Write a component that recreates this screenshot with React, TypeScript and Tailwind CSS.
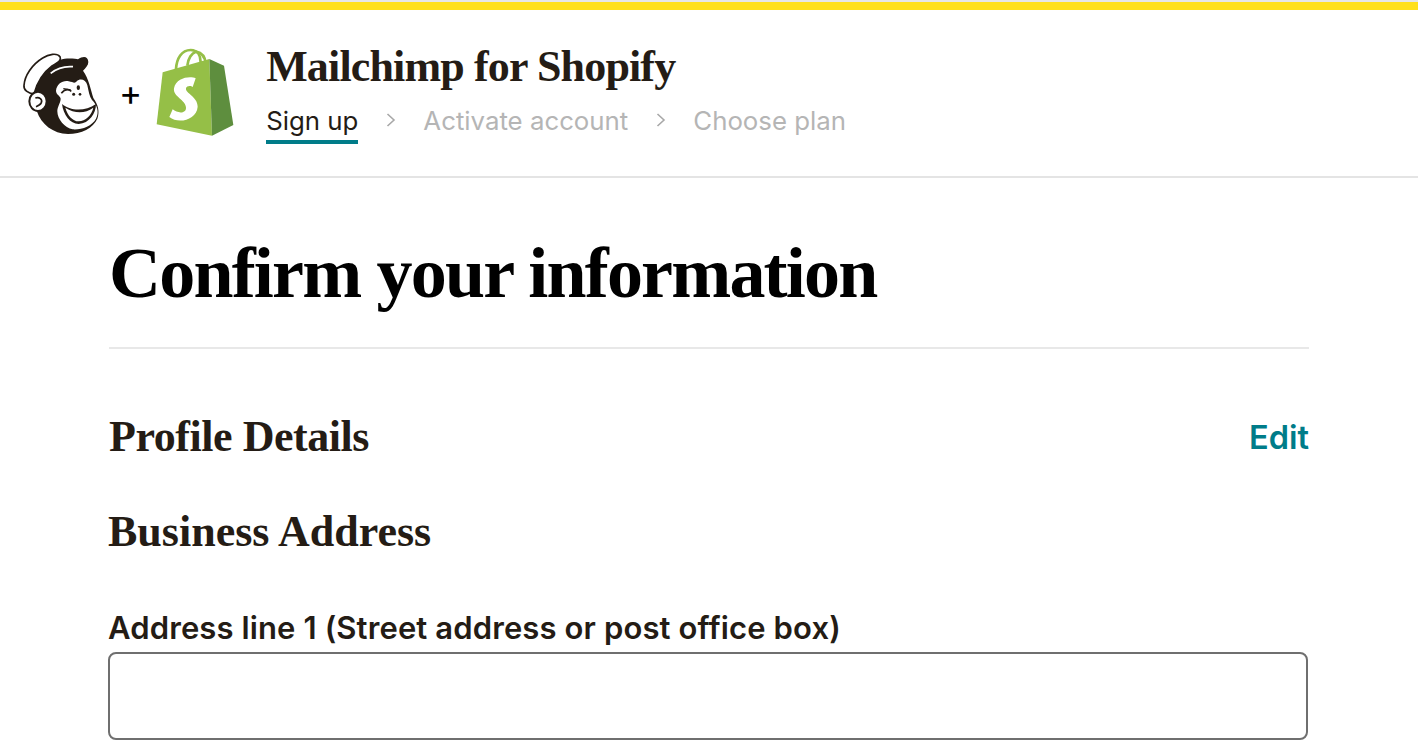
import React from "react";

const serif = "font-['Liberation_Serif',serif]";

const MonkeyLogo: React.FC = () => (
   <svg width="85" height="88" viewBox="0 0 255 264" className="shrink-0">
      {/* head */}
      <path d="M125 36 C150 28 175 34 180 34 C195 24 210 24 211 42 C211 52 203 60 195 68 C212 90 218 125 226 150 C240 170 246 190 238 212 C226 240 190 258 150 258 C105 256 70 230 56 188 C46 150 46 105 80 70 C92 56 108 44 125 36 Z" fill="#241C15" />
      {/* cap peak */}
      <path d="M18 112 C20 82 42 50 74 30 C92 18 117 14 126 26 C132 40 116 44 102 54 C78 72 58 100 48 138 C30 136 16 126 18 112 Z" fill="#fff" stroke="#241C15" strokeWidth="5" />
      <path d="M98 76 C115 62 140 54 165 56" fill="none" stroke="#fff" strokeWidth="5" />
      {/* ear */}
      <ellipse cx="60" cy="160" rx="26" ry="29" fill="#fff" stroke="#241C15" strokeWidth="6" />
      <path d="M52 150 C64 146 74 154 70 164 C67 171 60 174 54 176" fill="none" stroke="#241C15" strokeWidth="5" />
      {/* face */}
      <path d="M114 128 C116 108 135 96 152 100 C165 102 170 108 176 100 C186 90 204 94 208 112 C212 130 214 146 222 156 C238 172 244 192 234 212 C222 234 190 246 164 244 C140 240 118 214 118 190 C118 176 128 164 128 152 C126 142 114 140 114 128 Z" fill="#fff" />
      {/* wink */}
      <path d="M130 136 C140 124 150 122 160 130" fill="none" stroke="#241C15" strokeWidth="5" />
      <path d="M136 122 L158 126" fill="none" stroke="#241C15" strokeWidth="4" />
      <ellipse cx="181" cy="119" rx="5" ry="7" fill="#241C15" />
      <circle cx="167" cy="139" r="4.500" fill="#241C15" />
      <circle cx="186" cy="139" r="4" fill="#241C15" />
      {/* smile */}
      <path d="M132 168 C155 188 200 192 234 168 C234 196 214 226 182 228 C156 228 136 200 132 168 Z" fill="#241C15" />
      <path d="M142 179 C170 197 200 198 226 179 C222 200 202 220 182 220 C164 220 148 202 142 179 Z" fill="#fff" />
   </svg>
);

const ShopifyLogo: React.FC = () => (
   <svg width="90" height="95" viewBox="0 0 270 285" className="shrink-0">
      <path d="M78 72 C80 40 95 15 122 15 C145 15 152 35 152 52" fill="none" stroke="#95BF47" strokeWidth="8" />
      <path d="M112 62 C114 40 125 24 138 20 C158 24 166 40 167 56" fill="none" stroke="#95BF47" strokeWidth="8" />
      <path d="M38 82 L178 42 L186 272 L20 238 Z" fill="#95BF47" />
      <path d="M178 42 L222 62 L250 240 L186 272 Z" fill="#5E8E3E" />
      <path d="M137 100 C120 92 78 98 72 130 C68 155 108 165 108 188 C108 207 82 205 68 193 L58 216 C85 238 140 225 143 185 C143 155 105 145 108 130 C110 120 125 122 128 126 Z" fill="#fff" />
   </svg>
);

const Chevron: React.FC = () => (
   <svg width="10" height="16" viewBox="0 0 10 16" className="mx-[27.500px] mb-[6px] shrink-0">
      <path d="M1.500 2 L8 8 L1.500 14" fill="none" stroke="#a8a8a8" strokeWidth="1.600" />
   </svg>
);

const App: React.FC = () => {
   return (
      <div className="h-[751px] overflow-hidden bg-white font-['Inter',sans-serif] text-[#241c15]">
         <div className="h-[10px] border-t-2 border-[#e6e6e6] bg-[#ffe01b]" />

         <header className="flex h-[168px] items-center border-b-2 border-[#e4e4e4] pl-[18px] pb-[2px]">
            <MonkeyLogo />
            <span className="ml-[16px] mr-[8px] text-[35px] leading-none font-normal text-black">+</span>
            <ShopifyLogo />
            <div className="ml-[26px] mb-[2px]">
               <h1 className={`${serif} text-[44px] leading-[56px] font-bold tracking-[-0.85px]`}>Mailchimp for Shopify</h1>
               <nav className="mt-[8px] flex items-center text-[25.800px] leading-[36px] text-[#b5b5b5]">
                  <span className="border-b-[4px] border-[#007c89] pb-[1px] text-[#241c15]">Sign up</span>
                  <Chevron />
                  <span className="pb-[5px]">Activate account</span>
                  <Chevron />
                  <span className="pb-[5px]">Choose plan</span>
               </nav>
            </div>
         </header>

         <main className="px-[109px]">
            <h2 className={`${serif} pt-[53px] pb-[32px] text-[72px] leading-[84px] font-bold tracking-[-1.8px] text-black border-b-2 border-[#e8e8e8]`}>
               Confirm your information
            </h2>
            <div className="mt-[60px] flex items-center justify-between">
               <h3 className={`${serif} text-[44px] leading-[56px] font-bold tracking-[-0.45px]`}>Profile Details</h3>
               <a className="mt-[2px] text-[32.500px] font-semibold text-[#007c89]">Edit</a>
            </div>
            <h3 className={`${serif} -ml-[1px] mt-[39px] text-[44px] leading-[56px] font-bold`}>Business Address</h3>
            <label className="-ml-[1px] mt-[48px] block text-[31px] leading-[40px] font-semibold tracking-[0.12px]">
               Address line 1 (Street address or post office box)
            </label>
            <input className="-ml-[1px] mt-[4px] block h-[88px] w-full rounded-[8px] border-2 border-[#6f6f6f] bg-white" />
         </main>
      </div>
   );
};

export default App;
